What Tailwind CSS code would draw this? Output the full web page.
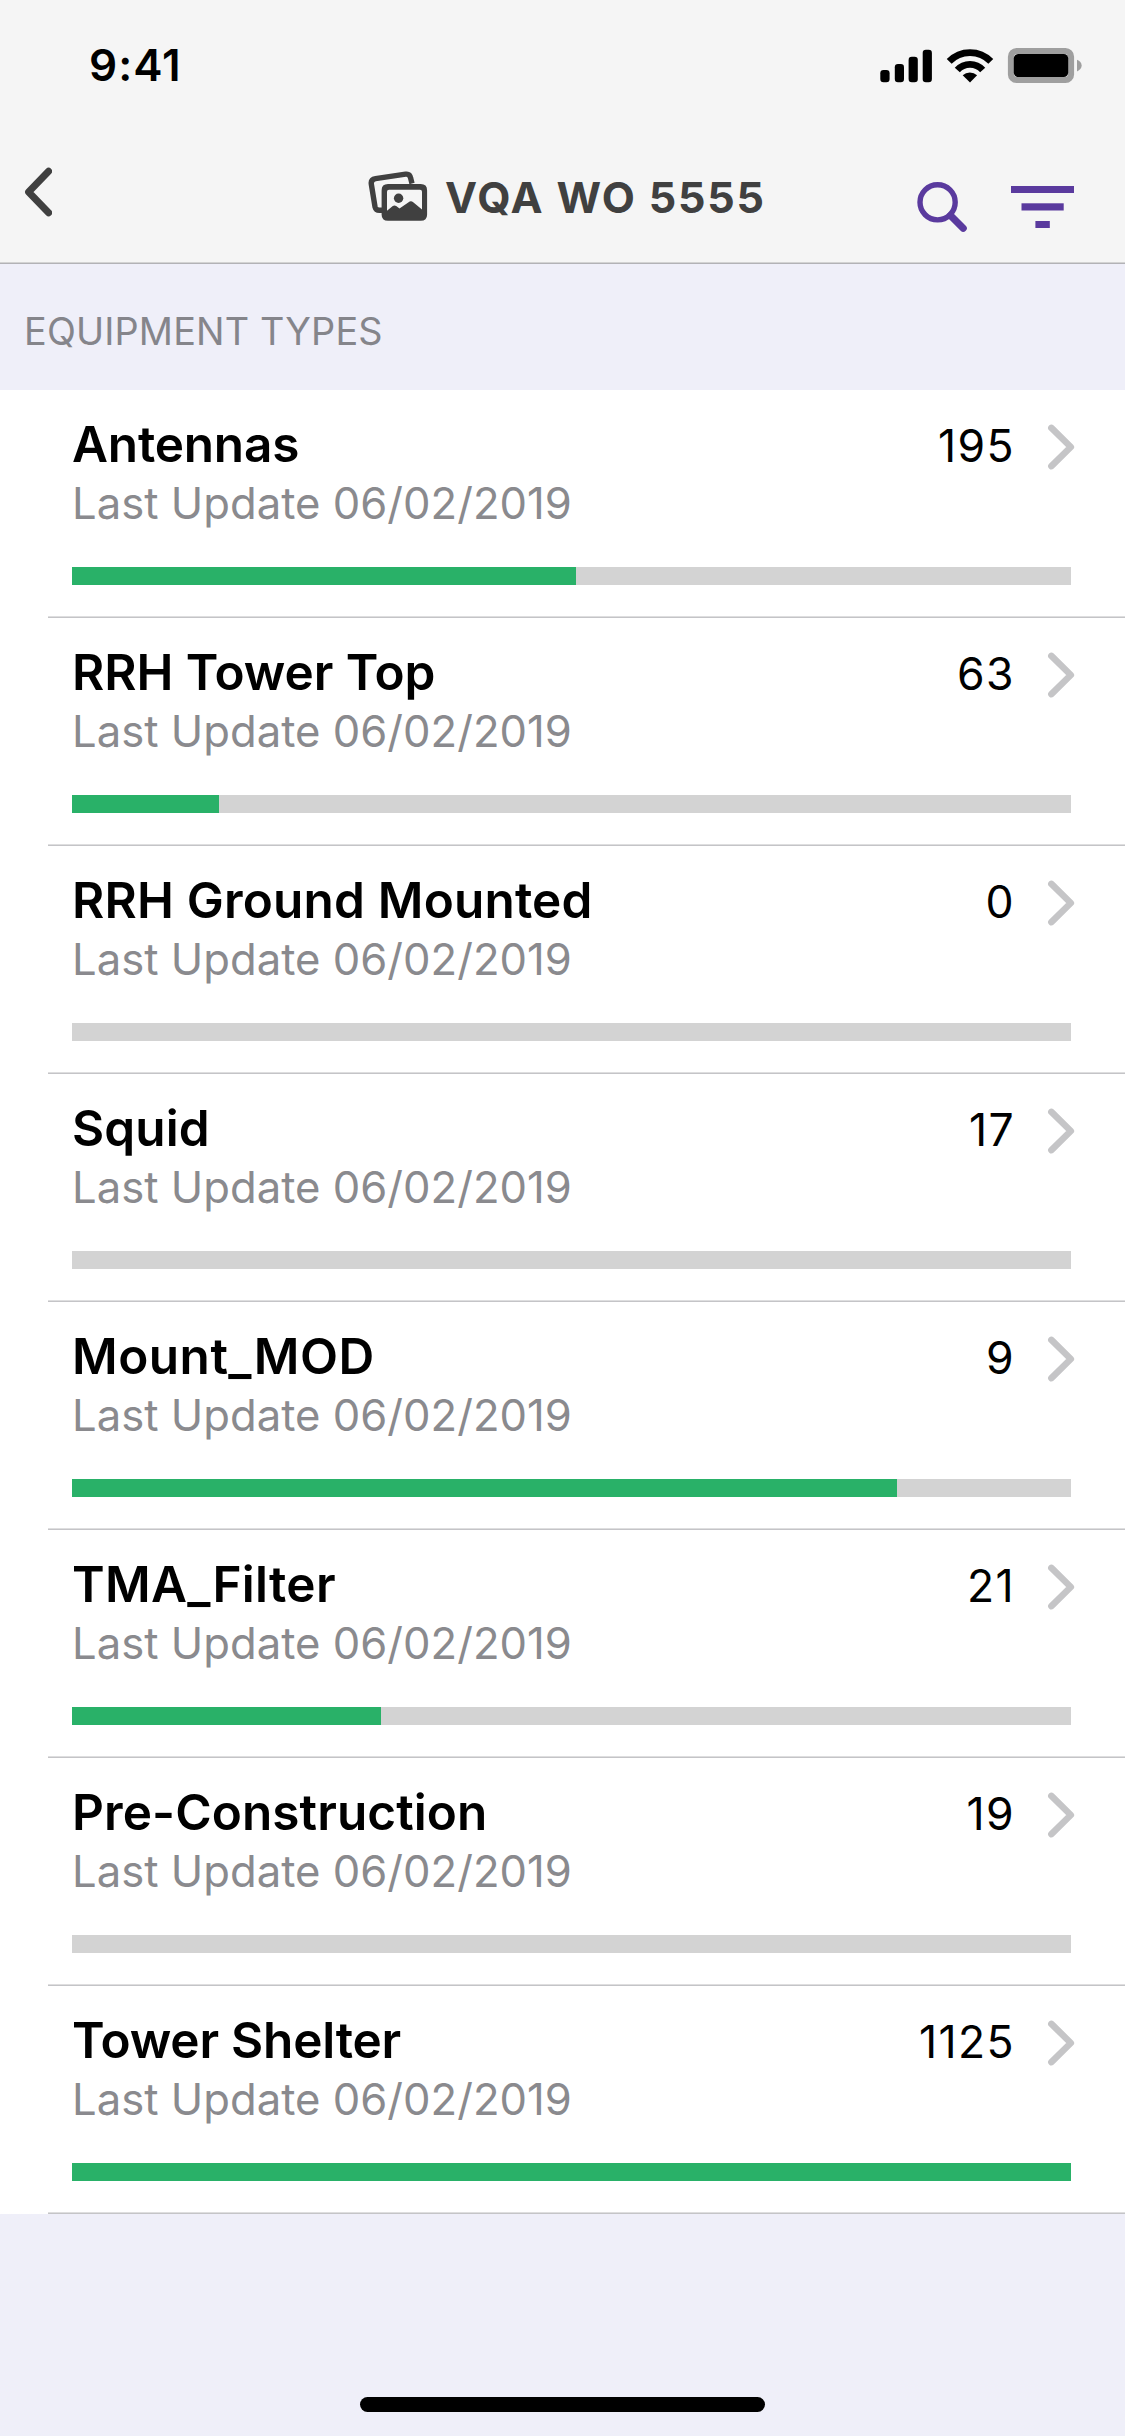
<!DOCTYPE html>
<html lang="en">
<head>
<meta charset="utf-8">
<meta name="viewport" content="width=device-width, initial-scale=1">
<title>VQA WO 5555</title>
<script src="https://cdn.jsdelivr.net/npm/@tailwindcss/browser@4"></script>
</head>
<body class="bg-[#efeff9] font-['Inter',sans-serif] text-black">
<div class="flex h-[2436px] w-[1125px] flex-col overflow-hidden">

  <header class="bg-[#f5f5f5]">
    <!-- Status bar -->
    <div class="flex h-[132px] items-start justify-between pr-[43px] pl-[89px]">
      <span class="mt-[35px] text-[44px] leading-[60px] font-semibold tracking-[1px]">9:41</span>
      <svg class="h-[132px] w-[202px]" viewBox="880 0 202 132" fill="none">
        <g fill="#000">
          <rect x="880.3" y="70" width="9.3" height="12.3" rx="3.2"/>
          <rect x="894.8" y="64" width="9.2" height="18.3" rx="3.2"/>
          <rect x="908.6" y="56.8" width="9.2" height="25.5" rx="3.2"/>
          <rect x="922.7" y="49.7" width="9.2" height="32.6" rx="3.2"/>
          <path d="M962.7 75.2A10.6 10.6 0 0 1 977.1 75.2L970 82.4Z"/>
        </g>
        <g stroke="#000" stroke-width="6.8">
          <path d="M949.2 61.4A29 29 0 0 1 990.8 61.4"/>
          <path d="M957.3 70.1A17 17 0 0 1 982.7 70.1"/>
        </g>
        <rect x="1011" y="51.2" width="60" height="28.8" rx="5.5" stroke="#9f9f9f" stroke-width="6.2"/>
        <rect x="1013.8" y="53.9" width="54.4" height="23.2" rx="4.5" fill="#000"/>
        <path d="M1077 59.8C1079.8 60.8 1081.7 63 1081.7 65.6S1079.8 70.4 1077 71.4Z" fill="#9f9f9f"/>
      </svg>
    </div>

    <!-- Navigation bar -->
    <nav class="flex h-[130px] items-start pr-[51px] pl-[24px]">
      <svg class="h-[130px] w-7" viewBox="24 132 28 130" fill="none" stroke="#404040" stroke-width="7" stroke-linecap="round" stroke-linejoin="round">
        <path d="M48.6 171.3L28.6 192L48.6 212.7"/>
      </svg>
      <div class="ml-[316px] flex items-start gap-[17px]">
        <svg class="h-[130px] w-[60px]" viewBox="368 132 60 130" fill="none">
          <path d="M412 183.5L410.6 178Q409.8 173.6 405.6 174.2L375.5 178.7Q370.7 179.5 371.3 184L375 206.8Q375.9 210.3 379.4 210.3H383" stroke="#404040" stroke-width="5.4"/>
          <path fill-rule="evenodd" fill="#404040" d="M388 184H420.7Q427.1 184 427.1 190.4V214.4Q427.1 220.8 420.7 220.8H388Q381.6 220.8 381.6 214.4V190.4Q381.6 184 388 184ZM387 210.7L392.8 206Q394.5 204.9 396.2 206.1L399.5 208.5L408.6 202.2Q410.9 200.4 413.2 202.2L422 209.5V191.8Q422 189.8 420 189.8H389Q387 189.8 387 191.8Z"/>
          <circle cx="398.6" cy="198.2" r="4.7" fill="#404040"/>
        </svg>
        <h1 class="mt-[35px] text-[43px] leading-[60px] font-bold tracking-[1.8px] whitespace-nowrap text-[#404040]">VQA WO 5555</h1>
      </div>
      <div class="ml-auto flex items-start gap-[43px]">
        <svg class="h-[130px] w-[51px]" viewBox="917 132 51 130" fill="none" stroke="#5a3a9e">
          <circle cx="937.6" cy="202.3" r="17.6" stroke-width="5.4"/>
          <path d="M950.5 215.5L963.2 228.3" stroke-width="7.2" stroke-linecap="round"/>
        </svg>
        <svg class="h-[130px] w-[63px]" viewBox="1011 132 63 130" fill="#5a3a9e">
          <rect x="1011" y="186" width="63" height="7"/>
          <rect x="1021.5" y="203.3" width="42.2" height="7.2"/>
          <rect x="1035.4" y="221" width="14.4" height="7"/>
        </svg>
      </div>
    </nav>
    <div class="h-0.5 border-t border-[#d3d3d3] bg-[#b2b2b6]"></div>
  </header>

  <h2 class="h-[126px] pt-[37px] pl-[24px] text-[37.8px] leading-[60px] tracking-[0.16px] text-[#85858b]">EQUIPMENT TYPES</h2>

  <main id="list" class="bg-white"></main>

  <footer class="mt-auto flex justify-center pb-6">
    <div class="h-[15px] w-[405px] rounded-full bg-black"></div>
  </footer>
</div>

<script>
  const BAR_WIDTH = 999;
  const rows = [
    { name: 'Antennas', tracking: 'tracking-[-0.2px]', count: 195, done: 504 },
    { name: 'RRH Tower Top', tracking: 'tracking-[-0.07px]', count: 63, done: 147 },
    { name: 'RRH Ground Mounted', tracking: 'tracking-[0.19px]', count: 0, done: 0 },
    { name: 'Squid', tracking: 'tracking-[0.1px]', count: 17, done: 0 },
    { name: 'Mount_MOD', tracking: 'tracking-[0.5px]', count: 9, done: 825 },
    { name: 'TMA_Filter', tracking: 'tracking-[0.3px]', count: 21, done: 309 },
    { name: 'Pre-Construction', tracking: 'tracking-[0.09px]', count: 19, done: 0 },
    { name: 'Tower Shelter', tracking: 'tracking-[-0.22px]', count: 1125, done: 999 },
  ];
  document.getElementById('list').innerHTML = rows.map(r => `
    <section class="flex h-[228px] flex-col pl-12">
      <div class="flex items-start pt-6 pr-[50px] pl-6">
        <div class="flex-1">
          <h3 class="text-[49.5px] leading-[60px] font-semibold whitespace-nowrap ${r.tracking}">${r.name}</h3>
          <p class="text-[43.6px] leading-[60px] tracking-[0.02px] whitespace-nowrap text-[#8a8a8e]">Last Update 06/02/2019</p>
        </div>
        <span class="mt-[2px] text-[44.5px] leading-[60px] tracking-[1.4px]">${r.count}</span>
        <svg class="mt-[9px] ml-8 h-12 w-7" viewBox="0 0 28 48" fill="none" stroke="#c5c5c7" stroke-width="6.6" stroke-linecap="round" stroke-linejoin="round">
          <path d="M4.4 4.9L23.8 24L4.4 43.1"/>
        </svg>
      </div>
      <div class="mt-[33px] ml-6 h-[18px] w-[999px] bg-[#d3d3d3]">
        <div class="h-full bg-[#29b168]" style="width:${r.done / BAR_WIDTH * 100}%"></div>
      </div>
      <div class="mt-auto h-0.5 border-t border-[#dededf] bg-[#c4c4c7]"></div>
    </section>`).join('');
</script>
</body>
</html>
